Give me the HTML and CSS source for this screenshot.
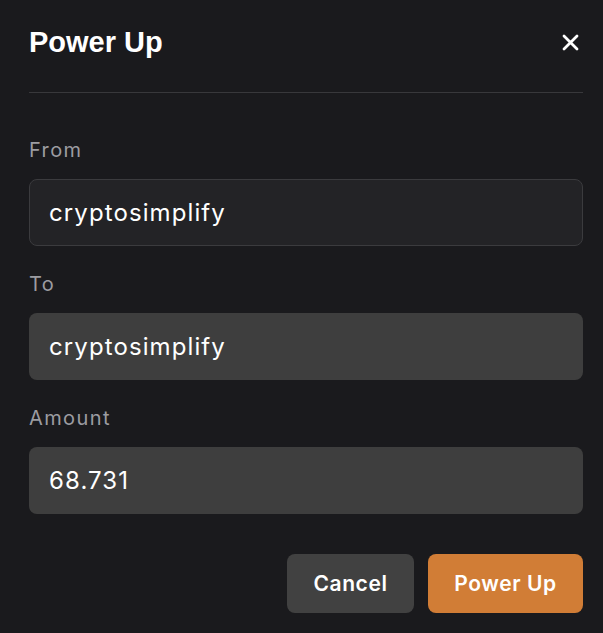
FILE: index.html
```html
<!DOCTYPE html>
<html>
<head>
<meta charset="utf-8">
<link rel="stylesheet" href="styles.css">
</head>
<body>
<div class="modal">
  <div class="header">
    <h1 class="title">Power Up</h1>
    <button class="close" aria-label="Close">
      <svg width="17" height="17" viewBox="0 0 17 17"><path d="M2 2L15 15M15 2L2 15" stroke="#fff" stroke-width="2.8" stroke-linecap="round"/></svg>
    </button>
  </div>
  <div class="divider"></div>
  <div class="form">
    <label class="label">From</label>
    <div class="field field-outline">cryptosimplify</div>
    <label class="label">To</label>
    <div class="field">cryptosimplify</div>
    <label class="label">Amount</label>
    <div class="field">68.731</div>
  </div>
  <div class="actions">
    <button class="btn btn-cancel">Cancel</button>
    <button class="btn btn-primary">Power Up</button>
  </div>
</div>
</body>
</html>
```
FILE: styles.css
```css
* { box-sizing: border-box; }
html, body { margin: 0; padding: 0; }
body {
  background: #1a1a1d;
  font-family: Inter, "Noto Sans", sans-serif;
  color: #fff;
  width: 603px;
  height: 633px;
  overflow: hidden;
}
.modal {
  padding: 25px 20px 0 29px;
}
.header {
  display: flex;
  justify-content: space-between;
  align-items: center;
  height: 34px;
  margin-bottom: 33px;
}
.title {
  margin: 0;
  font-family: "Liberation Sans", Arial, sans-serif;
  font-size: 29px;
  line-height: 34px;
  font-weight: 700;
}
.close {
  background: none;
  border: 0;
  padding: 0;
  width: 17px;
  height: 17px;
  margin-right: 4px;
  display: flex;
}
.divider {
  height: 1px;
  background: #38383b;
}
.form {
  display: flex;
  flex-direction: column;
  padding-top: 45px;
}
.label {
  font-size: 20px;
  color: #9c9ca1;
  line-height: 24px;
  letter-spacing: 1.4px;
  margin-bottom: 17px;
}
.field {
  height: 67px;
  border-radius: 8px;
  background: #3e3e3e;
  padding: 0 20px;
  display: flex;
  align-items: center;
  font-size: 24px;
  letter-spacing: 1.1px;
  color: #fff;
  margin-bottom: 26px;
}
.field-outline {
  background: #232326;
  border: 1px solid #3b3b3e;
  padding-left: 19px;
}
.actions {
  display: flex;
  justify-content: flex-end;
  gap: 14px;
  margin-top: 14px;
}
.btn {
  height: 59px;
  border: 0;
  border-radius: 8px;
  font-family: Inter, "Noto Sans", sans-serif;
  font-size: 21px;
  font-weight: 600;
  letter-spacing: 0.6px;
  color: #fff;
  padding: 0;
}
.btn-cancel { background: #414141; width: 127px; }
.btn-primary { background: #d17d36; width: 155px; }
```
